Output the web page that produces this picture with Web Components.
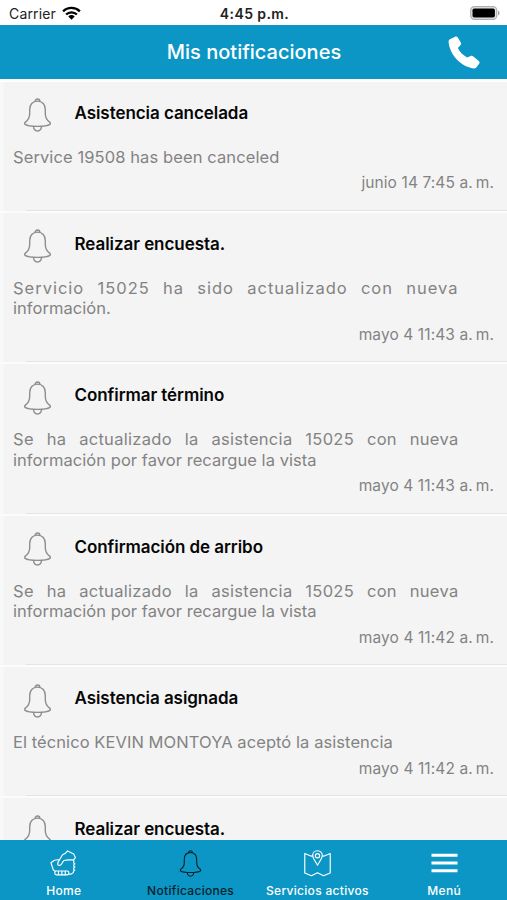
<!DOCTYPE html>
<html lang="es">
<head>
<meta charset="UTF-8">
<meta name="viewport" content="width=device-width, initial-scale=1.0">
<title>Mis notificaciones</title>
<style>
  :root {
    --brand: #0b96c5;
    --row: #f4f4f4;
    --text-gray: #838383;
  }
  html, body { margin: 0; height: 100%; }
  body { font-family: Inter, "Liberation Sans", sans-serif; background: #fff; overflow: hidden; }
</style>
</head>
<body>
<notifications-app></notifications-app>

<script>
const ICONS = {
  bell: `<svg viewBox="0 0 28 34" fill="none" stroke="currentColor" stroke-width="1.4">
    <path d="M11.6 3.4a2.4 2.4 0 1 1 4.8 0M14 3.1c-5 0-7.8 3.6-7.8 8.5v4c0 4.2-1.3 6.4-4.3 8.5-.9.7-1 1.800-.3 2.300 2 1.400 7 2 12.400 2s10.400-.6 12.400-2c.7-.5.6-1.600-.3-2.300-3-2.100-4.300-4.300-4.300-8.500v-4C21.800 6.700 19 3.100 14 3.100Z"/>
    <path d="M10.200 28.200a3.900 3.900 0 1 0 7.600 0"/></svg>`,
  phone: `<svg viewBox="0 0 34 34" fill="currentColor">
    <path d="M2 3.400 7.200.7c1.100-.6 2.200-.3 2.900.8l3.100 5.300c.6 1 .4 1.900-.4 2.800l-2.600 2.800c2 4.200 5.200 7.500 9.500 9.700l3.600-1.500c1-.4 2-.2 2.800.5l5.600 4.600c.9.800 1.100 1.700.5 2.700l-3 4c-.7.900-1.600 1.200-2.700 1.100C13.500 31.600 2 20.200.6 6.300.5 5 .9 4 2 3.400Z"/></svg>`,
  hands: `<svg viewBox="0 0 28 28" fill="none" stroke="currentColor" stroke-width="1.200" stroke-linejoin="round" stroke-linecap="round">
    <path d="M5.200 21.800 3.500 20.800 1 13.200l3.600-2.600 5.400-.7 3-4.900 2.700-1.300L18.200 1l6.400 3.100L26.400 8l-1.800 2.100M10 9.900c-1.500 1.700-2.300 3.300-2 4.900.3 1.300 2.200 1.500 3.300.6 1.500-1.200 1.500-3.300 3.300-4.500 2.500-.9 6.700-.4 10-.8v3.300l1.300 1-1.300 1v1.300l1.200 1-1.200 1v1.300l1 1-1.300 1.100v1.300l-2.400 1.600-2.600.1"/>
    <rect x="5" y="21.800" width="14.500" height="4" rx="1.600"/><path d="M8.800 22v3.600M12.300 22v3.600M15.800 22v3.600"/></svg>`,
  map: `<svg viewBox="0 0 28 28" fill="none" stroke="currentColor" stroke-width="1.200" stroke-linejoin="round">
    <path d="M9 5.600 7.600 6.400.8 3.600v20.200l6.900 2.900 6.300-3.200 6.300 3.200 6.900-2.900V3.600l-6.800 2.800-1.100-.7"/>
    <path d="M14 .8c-2.900 0-5 2.100-5 4.900 0 3.100 3.200 6.300 5 10.100 1.800-3.800 5-7 5-10.100C19 2.900 16.900.8 14 .8Z"/>
    <circle cx="14" cy="5.900" r="2.200"/></svg>`,
  menu: `<svg viewBox="0 0 28 28" fill="currentColor"><path d="M.5 4h27v3H.5zM.5 12h27v3H.5zM.5 20h27v3H.5z"/></svg>`,
  wifi: `<svg viewBox="0 0 19 14" fill="none" stroke="currentColor" stroke-width="2.300">
    <path d="M1.100 5.400a12 12 0 0 1 16.800 0M4.100 8.500a7.700 7.700 0 0 1 10.800 0"/><path fill="currentColor" stroke="none" d="m9.500 13.700-3.200-3.300a4.600 4.600 0 0 1 6.400 0z"/></svg>`,
  battery: `<svg viewBox="0 0 30 14">
    <rect x=".7" y=".7" width="26" height="12.600" rx="3.600" fill="#e4e4e4" stroke="#b0b0b0" stroke-width="1.200"/>
    <rect x="2.500" y="2.500" width="22.400" height="9" rx="1.800" fill="#000"/><path d="M28 4.700c2 .5 2 4.100 0 4.600z" fill="#a5a5a5"/></svg>`
};

class UiIcon extends HTMLElement {
  constructor() {
    super();
    this.attachShadow({ mode: 'open' });
  }

  connectedCallback() {
    this.shadowRoot.innerHTML = `
      <style>
        :host { display: block; flex: none; }
        svg { display: block; width: 100%; height: 100%; overflow: visible; }
      </style>
      ${ICONS[this.getAttribute('name')]}
    `;
  }
}

class StatusBar extends HTMLElement {
  constructor() {
    super();
    this.attachShadow({ mode: 'open' });
    this.shadowRoot.innerHTML = `
      <style>
        :host { display: grid; grid-template-columns: 1fr auto 1fr; align-items: center; height: 25px; padding: 2px 7px 0 9px; box-sizing: border-box; background: #fff; color: #222; font-size: 14px; line-height: 20px; }
        .left { display: flex; align-items: center; gap: 6px; letter-spacing: .15px; }
        .left ui-icon { width: 19px; height: 14px; margin-top: -2px; color: #000; }
        .time { font-weight: 600; letter-spacing: .4px; }
        .battery { justify-self: end; width: 30px; height: 14px; margin-top: -1px; }
      </style>
      <div class="left"><span>Carrier</span><ui-icon name="wifi"></ui-icon></div>
      <div class="time">4:45 p.m.</div>
      <ui-icon class="battery" name="battery"></ui-icon>
    `;
  }
}

class NavHeader extends HTMLElement {
  constructor() {
    super();
    this.attachShadow({ mode: 'open' });
    this.shadowRoot.innerHTML = `
      <style>
        :host { display: grid; grid-template-columns: 1fr auto 1fr; align-items: center; height: 54px; padding: 0 26px 0 27px; box-sizing: border-box; background: var(--brand); color: #fff; }
        h1 { grid-column: 2; margin: 0; font-size: 20px; line-height: 24px; font-weight: 500; }
        ui-icon { justify-self: end; width: 33px; height: 33px; }
      </style>
      <h1><slot></slot></h1>
      <ui-icon name="phone"></ui-icon>
    `;
  }
}

class NotificationItem extends HTMLElement {
  constructor() {
    super();
    this.attachShadow({ mode: 'open' });
    this.shadowRoot.innerHTML = `
      <style>
        :host { display: block; box-sizing: border-box; padding: 16.5px 13px 0; background: linear-gradient(#fff, #fff) 0 100% / 26px 2px no-repeat, linear-gradient(to right, #f8f8f8 3px, var(--row) 4px); }
        header { display: flex; height: 34px; padding-left: 10px; }
        ui-icon { width: 29px; height: 34px; color: #8e8e8e; }
        h2 { margin: 3.5px 0 0 22.5px; font-size: 17px; line-height: 22px; font-weight: 600; letter-spacing: -.06px; color: #060606; white-space: nowrap; }
        .message { width: 445.5px; margin-top: 14.5px; font-size: 16.5px; line-height: 20.4px; letter-spacing: .05px; color: var(--text-gray); }
        .date { margin-top: 6.2px; height: 20px; font-size: 15.5px; line-height: 20px; letter-spacing: .1px; color: var(--text-gray); text-align: right; }
        .line { height: 1px; margin: 16.5px -13px 0 13px; background: #e4e4e4; }
        .gap { height: 2px; margin: 0 -13px; background: #fcfcfc; }
      </style>
      <header><ui-icon name="bell"></ui-icon><h2><slot name="title"></slot></h2></header>
      <div class="message"><slot></slot></div>
      <div class="date"><slot name="date"></slot></div>
      <div class="line"></div>
      <div class="gap"></div>
    `;
  }
}

class TabItem extends HTMLElement {
  constructor() {
    super();
    this.attachShadow({ mode: 'open' });
    this.shadowRoot.innerHTML = `
      <style>
        :host { display: flex; flex-direction: column; align-items: center; padding: 10px 0 0 1px; color: #fff; font-size: 12px; line-height: 16px; font-weight: 500; white-space: nowrap; letter-spacing: .3px; }
        :host([active]) { color: #07212b; }
        ui-icon { width: 27px; height: 27px; margin-bottom: 6px; }
        :host([active]) ui-icon { width: 23px; }
      </style>
      <ui-icon name="${this.getAttribute('icon')}"></ui-icon>
      <slot></slot>
    `;
  }
}

class NotificationsApp extends HTMLElement {
  constructor() {
    super();
    this.attachShadow({ mode: 'open' });
    this.items = [
      { title: 'Asistencia cancelada', lines: ['Service 19508 has been canceled'], tracking: .1, date: 'junio 14 7:45 a.\u2009m.' },
      { title: 'Realizar encuesta.', lines: ['Servicio 15025 ha sido actualizado con nueva', 'información.'], tracking: 1, date: 'mayo 4 11:43 a.\u2009m.' },
      { title: 'Confirmar término', lines: ['Se ha actualizado la asistencia 15025 con nueva', 'información por favor recargue la vista'], tracking: .3, date: 'mayo 4 11:43 a.\u2009m.' },
      { title: 'Confirmación de arribo', lines: ['Se ha actualizado la asistencia 15025 con nueva', 'información por favor recargue la vista'], tracking: .3, date: 'mayo 4 11:42 a.\u2009m.' },
      { title: 'Asistencia asignada', lines: ['El técnico KEVIN MONTOYA aceptó la asistencia'], tracking: .07, date: 'mayo 4 11:42 a.\u2009m.' },
      { title: 'Realizar encuesta.', lines: [], date: '' }
    ];
    this.render();
  }

  render() {
    this.shadowRoot.innerHTML = `
      <style>
        :host { display: flex; flex-direction: column; height: 900px; }
        status-bar, nav-header, nav { flex: none; }
        main { flex: 1; min-height: 0; overflow: hidden; padding-top: 2.5px; background: #fff; }
        .row { display: block; white-space: nowrap; }
        .stretch { text-align-last: justify; }
        nav { display: grid; grid-template-columns: repeat(4, 1fr); height: 60px; background: var(--brand); }
      </style>
      <status-bar></status-bar>
      <nav-header>Mis notificaciones</nav-header>
      <main>
        ${this.items.map(item => `
          <notification-item>
            <span slot="title">${item.title}</span>
            ${item.lines.map((line, i) => {
              const stretch = i === 0 && item.lines.length > 1;
              return i === 0
                ? `<span class="row ${stretch ? 'stretch' : ''}" style="letter-spacing: ${item.tracking}px">${line}</span>`
                : `<span class="row">${line}</span>`;
            }).join('')}
            <span slot="date">${item.date}</span>
          </notification-item>
        `).join('')}
      </main>
      <nav>
        <tab-item icon="hands">Home</tab-item>
        <tab-item icon="bell" active>Notificaciones</tab-item>
        <tab-item icon="map">Servicios activos</tab-item>
        <tab-item icon="menu">Menú</tab-item>
      </nav>
    `;
  }
}

customElements.define('ui-icon', UiIcon);
customElements.define('status-bar', StatusBar);
customElements.define('nav-header', NavHeader);
customElements.define('notification-item', NotificationItem);
customElements.define('tab-item', TabItem);
customElements.define('notifications-app', NotificationsApp);
</script>
</body>
</html>
